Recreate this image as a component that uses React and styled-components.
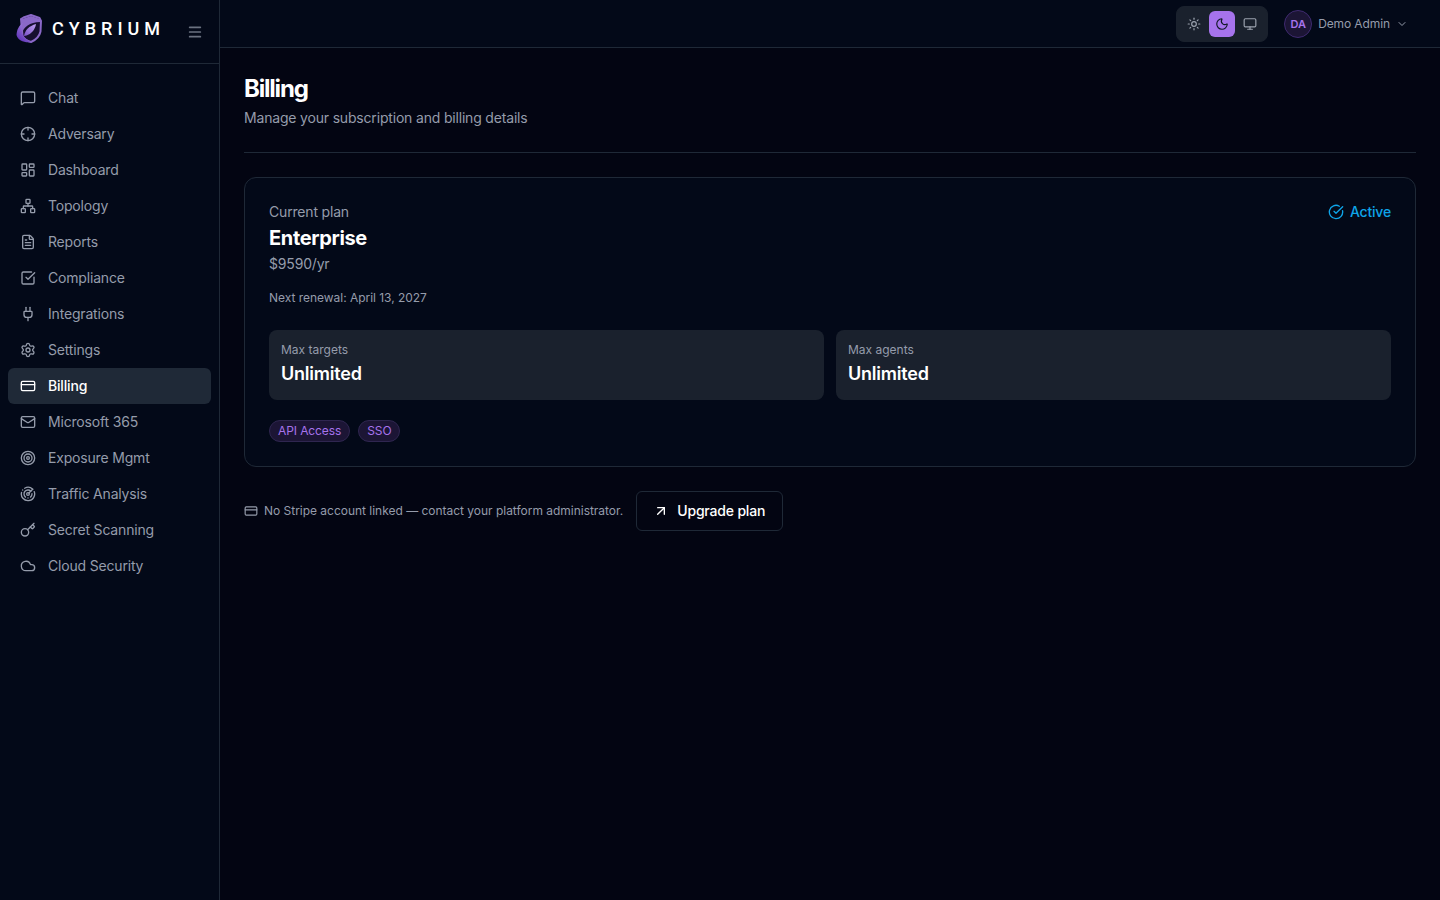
import React from 'react'
import styled, { createGlobalStyle } from 'styled-components'
import {
  MessageSquare, Crosshair, LayoutDashboard, Network, FileText, SquareCheckBig, Plug, Settings,
  CreditCard, Mail, Target, Radar, Key, Cloud, Menu, Sun, Moon, Monitor, ChevronDown,
  CircleCheckBig, ArrowUpRight,
} from 'lucide-react'

const GlobalStyle = createGlobalStyle`
  html, body, #root { height: 100%; }
  body {
    margin: 0;
    background: #030512;
    color: #fff;
    font-family: Inter, "Liberation Sans", sans-serif;
    -webkit-font-smoothing: antialiased;
  }
  * { box-sizing: border-box; }
`

const Shell = styled.div`
  display: flex;
  height: 900px;
  overflow: hidden;
`

const Sidebar = styled.aside`
  width: 220px;
  flex: none;
  background: #030918;
  border-right: 1px solid #1f2937;
`

const Brand = styled.div`
  height: 64px;
  display: flex;
  align-items: center;
  justify-content: space-between;
  padding: 0 16px;
  border-bottom: 1px solid #1f2937;
`

const Logo = styled.div`
  display: flex;
  align-items: center;
  gap: 10px;
  margin-bottom: 6px;
`

const Wordmark = styled.span`
  font-family: Roboto, sans-serif;
  font-size: 18px;
  font-weight: 500;
  letter-spacing: 5px;
  color: #fff;
`

const MenuButton = styled.button`
  display: flex;
  padding: 0;
  border: 0;
  background: none;
  color: #6b7280;
`

const Nav = styled.nav`
  display: flex;
  flex-direction: column;
  padding: 16px 8px;
`

const NavItem = styled.a`
  height: 36px;
  display: flex;
  align-items: center;
  gap: 12px;
  padding: 0 12px;
  border-radius: 6px;
  font-size: 14px;
  letter-spacing: -0.18px;
  font-weight: ${({ $active }) => ($active ? 500 : 400)};
  color: ${({ $active }) => ($active ? '#fff' : '#959cab')};
  background: ${({ $active }) => ($active ? '#1f2937' : 'transparent')};
`

const NavLabel = styled.span`
  padding-bottom: 2px;
`

const Content = styled.div`
  flex: 1;
  min-width: 0;
  display: flex;
  flex-direction: column;
`

const Topbar = styled.header`
  height: 48px;
  flex: none;
  display: flex;
  align-items: center;
  justify-content: flex-end;
  gap: 16px;
  padding: 0 24px;
  background: #030918;
  border-bottom: 1px solid #1f2937;
`

const ThemeSwitch = styled.div`
  display: flex;
  align-items: center;
  gap: 2px;
  padding: 4px;
  height: 36px;
  border: 1px solid #1a212d;
  border-radius: 8px;
  background: #1a212d;
`

const ThemeButton = styled.button`
  width: 26px;
  height: 26px;
  display: flex;
  align-items: center;
  justify-content: center;
  padding: 0;
  border: 0;
  border-radius: 6px;
  background: ${({ $active }) => ($active ? '#a673ec' : 'transparent')};
  color: ${({ $active }) => ($active ? '#111827' : '#9ca3af')};
`

const UserMenu = styled.div`
  display: flex;
  align-items: center;
  gap: 6px;
  padding-right: 8px;
  font-size: 12px;
  letter-spacing: -0.1px;
  color: #959cab;
`

const Avatar = styled.div`
  width: 28px;
  height: 28px;
  display: flex;
  align-items: center;
  justify-content: center;
  border-radius: 50%;
  border: 1px solid #3f2a70;
  background: #1c1535;
  color: #a673ec;
  font-size: 11px;
  font-weight: 600;
`

const Main = styled.main`
  flex: 1;
  padding: 24px;
`

const PageHead = styled.div`
  padding-bottom: 24px;
  margin-bottom: 24px;
  border-bottom: 1px solid #1f2937;
`

const Title = styled.h1`
  margin: 0 0 4px;
  padding-top: 1px;
  height: 32px;
  font-size: 24px;
  line-height: 32px;
  font-weight: 700;
  letter-spacing: -1.2px;
  color: #fff;
`

const Subtitle = styled.p`
  margin: 0;
  font-size: 14px;
  line-height: 20px;
  letter-spacing: -0.18px;
  color: #959cab;
`

const Card = styled.section`
  padding: 24px;
  border: 1px solid #1f2937;
  border-radius: 12px;
  background: #030918;
`

const PlanHead = styled.div`
  display: flex;
  justify-content: space-between;
  align-items: flex-start;
`

const Muted = styled.div`
  font-size: 14px;
  line-height: 20px;
  letter-spacing: -0.18px;
  color: #959cab;
`

const PlanName = styled.div`
  margin: 2px 0;
  font-size: 20px;
  line-height: 28px;
  font-weight: 700;
  letter-spacing: -0.35px;
  color: #fff;
`

const Status = styled.div`
  display: flex;
  align-items: center;
  gap: 6px;
  font-size: 14px;
  line-height: 20px;
  letter-spacing: -0.18px;
  font-weight: 500;
  color: #0ea5e9;
`

const Renewal = styled.div`
  margin-top: 16px;
  font-size: 12px;
  line-height: 16px;
  letter-spacing: -0.03px;
  color: #959cab;
`

const Stats = styled.div`
  display: grid;
  grid-template-columns: 1fr 1fr;
  gap: 12px;
  margin-top: 24px;
`

const Stat = styled.div`
  height: 70px;
  padding: 12px;
  border-radius: 8px;
  background: #1a212d;
`

const StatLabel = styled.div`
  font-size: 12px;
  line-height: 16px;
  color: #959cab;
`

const StatValue = styled.div`
  margin-top: 2px;
  font-size: 18px;
  line-height: 28px;
  font-weight: 600;
  letter-spacing: -0.22px;
  color: #fff;
`

const Tags = styled.div`
  display: flex;
  gap: 8px;
  margin-top: 20px;
`

const Tag = styled.span`
  height: 22px;
  display: flex;
  align-items: center;
  padding: 0 8px 1px;
  border: 1px solid #2f2650;
  border-radius: 999px;
  background: #1c1535;
  font-size: 12px;
  letter-spacing: -0.1px;
  color: #a673ec;
`

const Footer = styled.div`
  display: flex;
  align-items: center;
  gap: 13px;
  margin-top: 24px;
`

const Notice = styled.div`
  display: flex;
  align-items: center;
  gap: 6px;
  font-size: 12px;
  letter-spacing: -0.02px;
  color: #959cab;
`

const NoticeText = styled.span`
  padding-bottom: 2px;
`

const UpgradeButton = styled.button`
  width: 147px;
  height: 40px;
  display: flex;
  align-items: center;
  gap: 8px;
  padding: 0 16px;
  border: 1px solid #1f2937;
  border-radius: 6px;
  background: transparent;
  color: #fff;
  font-family: inherit;
  font-size: 14px;
  font-weight: 500;
  letter-spacing: -0.18px;
`

const UpgradeText = styled.span`
  padding-bottom: 2px;
`

const navItems = [
  ['Chat', MessageSquare],
  ['Adversary', Crosshair],
  ['Dashboard', LayoutDashboard],
  ['Topology', Network],
  ['Reports', FileText],
  ['Compliance', SquareCheckBig],
  ['Integrations', Plug],
  ['Settings', Settings],
  ['Billing', CreditCard],
  ['Microsoft 365', Mail],
  ['Exposure Mgmt', Target],
  ['Traffic Analysis', Radar],
  ['Secret Scanning', Key],
  ['Cloud Security', Cloud],
]

function ShieldLogo() {
  return (
    <svg width="26" height="29" viewBox="0 0 26 29" fill="none">
      <defs>
        <linearGradient id="swoosh" x1="2" y1="27" x2="20" y2="8" gradientUnits="userSpaceOnUse">
          <stop offset="0" stopColor="#5b2fb5" />
          <stop offset="1" stopColor="#c4a6f5" />
        </linearGradient>
      </defs>
      <path d="M15 1 L23.5 4 L25 7 L24.5 17.5 C23.5 22.5 19.5 26 15 28 C11.5 27 8 25.5 6.5 22 L5 5 L7.5 3.5 Z" stroke="#8a68c8" strokeWidth="2" strokeLinejoin="round" fill="#160f30" />
      <path d="M6 5 L15 2 L24 5 L24 8 C14 8 7 13 6 20 Z" fill="#8a68c8" />
      <path d="M0.5 21 C1 15 3 12 6.5 9 C5 13 5 17 6.5 20 C8.5 24.5 12 26.5 15.5 28 C9 29 2 27 0.5 21 Z" fill="url(#swoosh)" />
      <path d="M8 22 C9 16 13 12 20 10 C19 16 15 20 10.5 21.5 Z" fill="url(#swoosh)" />
    </svg>
  )
}

export default function App() {
  return (
    <>
      <GlobalStyle />
      <Shell>
        <Sidebar>
          <Brand>
            <Logo>
              <ShieldLogo />
              <Wordmark>CYBRIUM</Wordmark>
            </Logo>
            <MenuButton><Menu size={16} strokeWidth={2.6} /></MenuButton>
          </Brand>
          <Nav>
            {navItems.map(([label, Icon]) => (
              <NavItem key={label} $active={label === 'Billing'}>
                <Icon size={16} />
                <NavLabel>{label}</NavLabel>
              </NavItem>
            ))}
          </Nav>
        </Sidebar>
        <Content>
          <Topbar>
            <ThemeSwitch>
              <ThemeButton><Sun size={14} /></ThemeButton>
              <ThemeButton $active><Moon size={14} /></ThemeButton>
              <ThemeButton><Monitor size={14} /></ThemeButton>
            </ThemeSwitch>
            <UserMenu>
              <Avatar>DA</Avatar>
              <span>Demo Admin</span>
              <ChevronDown size={12} />
            </UserMenu>
          </Topbar>
          <Main>
            <PageHead>
              <Title>Billing</Title>
              <Subtitle>Manage your subscription and billing details</Subtitle>
            </PageHead>
            <Card>
              <PlanHead>
                <div>
                  <Muted>Current plan</Muted>
                  <PlanName>Enterprise</PlanName>
                  <Muted>$9590/yr</Muted>
                </div>
                <Status><CircleCheckBig size={16} />Active</Status>
              </PlanHead>
              <Renewal>Next renewal: April 13, 2027</Renewal>
              <Stats>
                <Stat>
                  <StatLabel>Max targets</StatLabel>
                  <StatValue>Unlimited</StatValue>
                </Stat>
                <Stat>
                  <StatLabel>Max agents</StatLabel>
                  <StatValue>Unlimited</StatValue>
                </Stat>
              </Stats>
              <Tags>
                <Tag>API Access</Tag>
                <Tag>SSO</Tag>
              </Tags>
            </Card>
            <Footer>
              <Notice>
                <CreditCard size={14} />
                <NoticeText>No Stripe account linked — contact your platform administrator.</NoticeText>
              </Notice>
              <UpgradeButton><ArrowUpRight size={16} /><UpgradeText>Upgrade plan</UpgradeText></UpgradeButton>
            </Footer>
          </Main>
        </Content>
      </Shell>
    </>
  )
}
